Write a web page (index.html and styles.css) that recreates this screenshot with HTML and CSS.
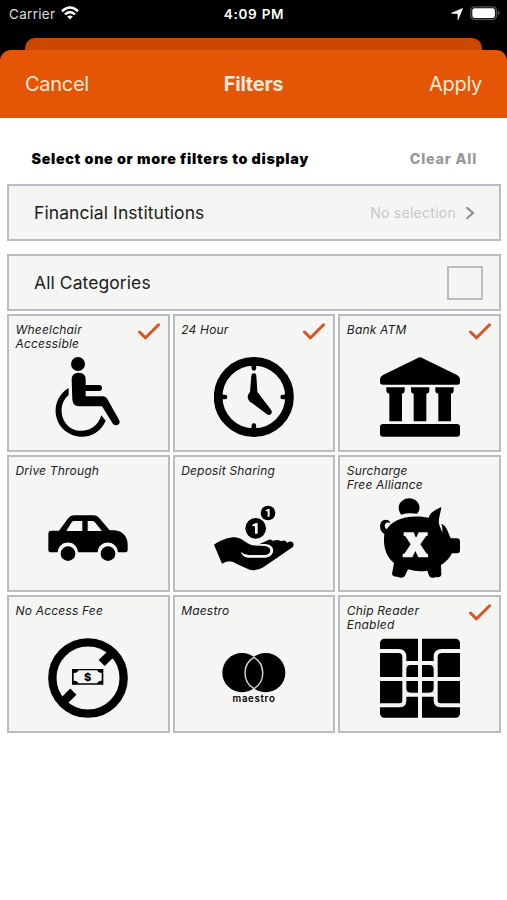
FILE: index.html
```html
<!DOCTYPE html>
<html lang="en">
<head>
<meta charset="utf-8">
<title>Filters</title>
<link rel="stylesheet" href="styles.css">
</head>
<body>
<header class="top">
  <div class="status">
    <div class="status-left"><span class="carrier">Carrier</span>
      <svg class="wifi" viewBox="0 0 18 14"><g fill="none" stroke="#fff" stroke-width="2.600"><path d="M1 5.200Q9-2.200 17 5.200"/><path d="M4 8.400Q9 3.800 14 8.400"/></g><path fill="#fff" d="M6.200 10.600Q9 8.400 11.800 10.600L9 13.600Z"/></svg>
    </div>
    <span class="time">4:09 PM</span>
    <div class="status-right">
      <svg class="location" viewBox="0 0 12 12"><path fill="#fff" stroke="#fff" stroke-width=".7" stroke-linejoin="round" d="M11.500.5 7 11.500V5.500L.5 5.200Z"/></svg>
      <svg class="battery" viewBox="0 0 30 15"><rect x=".8" y=".8" width="25.600" height="12.600" rx="3.600" fill="none" stroke="#555" stroke-width="1.300"/><rect x="2.300" y="2.300" width="22.600" height="9.600" rx="2.200" fill="#fff"/><path fill="#555" d="M27.800 4.800Q29.600 5.300 29.600 7.100T27.800 9.400Z"/></svg>
    </div>
  </div>
  <div class="back-sheet"></div>
  <nav class="bar"><span class="cancel">Cancel</span><h1 class="title">Filters</h1><span class="apply">Apply</span></nav>
</header>
<main class="content">
  <div class="intro"><span class="prompt">Select one or more filters to display</span><span class="clear">Clear All</span></div>
  <div class="row institutions"><span class="row-label">Financial Institutions</span><span class="none">No selection</span><svg class="chevron" viewBox="0 0 10 14"><path d="M1.500 1.200 8 7 1.500 12.800" fill="none" stroke="#8d9093" stroke-width="2.200"/></svg></div>
  <div class="row categories"><span class="row-label">All Categories</span><span class="box"></span></div>
  <section class="grid">
    <div class="card"><span class="name">Wheelchair<br>Accessible</span>
      <svg class="check" viewBox="0 0 22 17"><path d="M1.500 9 7.500 14.800 20.500 1.800"/></svg>
      <svg class="icon" viewBox="145 142 240 240"><circle cx="235" cy="163" r="21"/><path d="M216 210Q216 189 237 189T258 210V226H298Q307 226 307 235T298 244H258V260H310Q319 260 323 268L358 330Q363 340 355 345T340 343L307 290H240Q220 290 218 270Z"/><path d="M207 235V256C174 284 181 337 217 357C252 374 294 357 305 317L318 333C302 373 258 391 218 376C155 351 151 268 207 235Z"/></svg>
    </div>
    <div class="card"><span class="name">24 Hour</span>
      <svg class="check" viewBox="0 0 22 17"><path d="M1.500 9 7.500 14.800 20.500 1.800"/></svg>
      <svg class="icon" viewBox="133 142 240 240"><circle cx="252.500" cy="262" r="107" fill="none" stroke="#000" stroke-width="26"/><path d="M252.500 165V176M252.500 348V359M155 262H166M339 262H350" stroke="#000" stroke-width="14" stroke-linecap="round"/><circle cx="252" cy="262" r="18"/><path d="M245 198Q245 191 252.500 191T260 198L264 258H240Z"/><path d="M266 251 304 300Q309 307 304 313T291 313L243 277Z"/></svg>
    </div>
    <div class="card"><span class="name">Bank ATM</span>
      <svg class="check" viewBox="0 0 22 17"><path d="M1.500 9 7.500 14.800 20.500 1.800"/></svg>
      <svg class="icon" viewBox="134 142 240 240"><path d="M246 146Q254 140 262 146L365 196Q374 201 374 209V217Q374 225 366 225H143Q134 225 134 217V209Q134 201 143 196Z"/><path d="M153 233H208V242Q208 252 200 252V335H162V252Q153 252 153 242Z"/><path d="M227 233H282V242Q282 252 273 252V335H235V252Q227 252 227 242Z"/><path d="M300 233H355V242Q355 252 347 252V335H309V252Q300 252 300 242Z"/><rect x="134" y="343" width="240" height="38" rx="9"/></svg>
    </div>
    <div class="card"><span class="name">Drive Through</span>
      <svg class="icon" viewBox="145 143 240 240"><path fill-rule="evenodd" d="M146 250Q146 241 155 241H178L206 203Q212 195 222 195H282Q291 195 298 202L330 240H343C370 241 384 260 384 282V298Q384 306 375 306H355C352 267 297 266 294 306H235C232 267 178 267 174 306H154Q146 306 146 298ZM200 242H248V212H222Q218 212 215 217ZM264 212V242H307L287 217Q283 212 278 212Z"/><circle cx="205" cy="310" r="22"/><circle cx="325" cy="310" r="22"/></svg>
    </div>
    <div class="card"><span class="name">Deposit Sharing</span>
      <svg class="icon" viewBox="133 143 240 240"><path fill-rule="evenodd" d="M133 283C153 269 176 261 197 261C217 262 230 281 248 285L287 287Q302 291 302 301Q301 311 287 314H237Q224 313 213 305Q220 322 236 322H288C306 320 314 306 309 293C304 281 287 279 268 282L298 268Q305 266 311 272Q323 265 334 273Q347 266 352 277Q368 269 372 281Q373 289 364 294L281 351Q255 366 235 356L203 342Q180 324 157 340Z"/><circle cx="258" cy="234" r="31"/><circle cx="295" cy="188" r="22"/><g fill="#f5f6f3"><path d="M248 228V223L258 218H264V250H256V228ZM288 183V180L295 176H300V199H294V183Z"/></g></svg>
    </div>
    <div class="card"><span class="name">Surcharge<br>Free Alliance</span>
      <svg class="icon" viewBox="134 143 240 240"><path d="M197 193C176 160 208 143 222 144C249 145 262 173 245 190Q219 186 197 193Z"/><path d="M147 251C127 239 132 208 151 208Q163 208 165 218C150 211 142 228 154 237C170 210 213 190 280 202C286 183 301 179 318 170C316 190 307 208 312 224L321 247Q322 230 318 220C333 226 337 242 346 264H364Q374 264 374 274V299Q374 309 365 309H350Q339 331 317 344L318 374Q315 383 301 380Q289 386 282 378L276 361Q246 366 218 357L208 378Q201 386 186 379Q173 380 170 371L176 338C150 317 143 285 147 251Z"/><path fill="#f5f6f3" d="M205 246H235L242 263 250 246H277V256L272 258 255 282 273 309 278 312V321H249L240 302 231 321H202V312L208 309 226 282 210 258 205 256Z"/></svg>
    </div>
    <div class="card"><span class="name">No Access Fee</span>
      <svg class="icon" viewBox="145 145 240 240"><circle cx="265" cy="265" r="107" fill="none" stroke="#000" stroke-width="25"/><path d="M306 220 337 190M190 337 221 306" stroke="#000" stroke-width="26"/><path fill-rule="evenodd" d="M217 238H311V285H217ZM222 250V273Q233 272 236 281H292Q296 272 306 273V250Q296 251 292 242H236Q233 251 222 250Z"/><text x="264" y="274" text-anchor="middle" class="dollar">$</text></svg>
    </div>
    <div class="card"><span class="name">Maestro</span>
      <svg class="icon" viewBox="133 145 240 240"><circle cx="217" cy="249" r="59"/><circle cx="288" cy="249" r="59"/><path d="M253 203C217 224 217 275 253 297C288 275 288 224 253 203Z" fill="none" stroke="#cfcfcf" stroke-width="4.500"/><text x="252" y="338" text-anchor="middle" textLength="127" class="maestro">maestro</text></svg>
    </div>
    <div class="card"><span class="name">Chip Reader<br>Enabled</span>
      <svg class="check" viewBox="0 0 22 17"><path d="M1.500 9 7.500 14.800 20.500 1.800"/></svg>
      <svg class="icon" viewBox="134 145 240 240"><rect x="134" y="147" width="240" height="237" rx="13"/><g fill="none" stroke="#f5f6f3" stroke-width="12"><path d="M254 145V385M134 268H374"/><path d="M134 184H190Q207 184 207 202V333Q207 347 190 347H134M374 184H320Q301 184 301 202V333Q301 347 320 347H374"/><path d="M207 220H301M207 315H301"/></g><path fill="none" stroke="#f5f6f3" stroke-width="4" d="M211 236Q213 225 225 224M283 224Q295 225 297 236M211 299Q213 310 225 311M283 311Q295 310 297 299"/></svg>
    </div>
  </section>
</main>
</body>
</html>
```
FILE: styles.css
```css
* { box-sizing: border-box; }
body { margin: 0; width: 507px; height: 900px; overflow: hidden; background: #fff; font-family: Inter, "Liberation Sans", sans-serif; color: #202020; }
svg { display: block; flex: none; }
span, h1 { white-space: nowrap; }
.top { background: #000; height: 118px; display: flex; flex-direction: column; }
.status { height: 38px; padding: 0 7px 0 9px; display: grid; grid-template-columns: 1fr auto 1fr; color: #fff; font-size: 13.5px; line-height: 28px; }
.status-left, .status-right { display: flex; height: 27px; align-items: center; }
.status-left { gap: 6px; }
.carrier { color: #ddd; letter-spacing: .3px; }
.wifi { width: 18px; height: 14px; margin-top: -1px; }
.time { font-weight: 600; letter-spacing: .75px; margin-left: -1px; }
.status-right { justify-content: flex-end; gap: 7px; }
.location { width: 12px; height: 12px; }
.battery { width: 30px; height: 15px; margin-top: -1px; }
.back-sheet { height: 12px; margin: 0 25px; background: #cb4800; border-radius: 10px 10px 0 0; }
.bar { height: 68px; background: #e55506; border-radius: 11px 11px 0 0; display: grid; grid-template-columns: 1fr auto 1fr; align-items: center; padding: 0 25px; color: #ffe9d8; font-size: 20px; letter-spacing: -.3px; }
.title { margin: 0; font-size: 20px; font-weight: 700; letter-spacing: -.25px; }
.apply { text-align: right; }
.content { padding: 0 6px 0 7px; }
.intro { height: 66px; padding: 15px 24px 0 24.5px; display: flex; align-items: center; justify-content: space-between; font-size: 14.3px; color: #000; }
.prompt { font-weight: 900; letter-spacing: .68px; }
.clear { color: #999; font-weight: 800; letter-spacing: .8px; }
.row { height: 57px; border: 2px solid #babdc0; background: #f5f6f3; display: flex; align-items: center; padding: 0 16px 0 25px; }
.institutions { padding-right: 24px; margin-bottom: 13px; }
.row-label { font-size: 17.5px; letter-spacing: .08px; margin-right: auto; }
.none { color: #c5c7c8; font-size: 14px; letter-spacing: .27px; }
.chevron { width: 10px; height: 14px; margin-left: 9px; }
.box { width: 36px; height: 34px; border: 2px solid #babdc0; }
.grid { margin-top: 3px; display: grid; grid-template-columns: repeat(3, 1fr); grid-auto-rows: 137.5px; gap: 3px; }
.card { position: relative; border: 2px solid #babdc0; background: #f5f6f3; display: flex; justify-content: center; padding-top: 41.3px; }
.name { position: absolute; left: 6.5px; top: 7px; font-size: 12px; line-height: 14.3px; font-style: italic; letter-spacing: .2px; }
.check { position: absolute; right: 8px; top: 7px; width: 22px; height: 17px; fill: none; stroke: #d95420; stroke-width: 3; stroke-linecap: round; stroke-linejoin: round; }
.icon { width: 80px; height: 80px; }
.dollar { font: 800 33px Inter, sans-serif; }
.maestro { font: 600 29px Inter, sans-serif; }
```
